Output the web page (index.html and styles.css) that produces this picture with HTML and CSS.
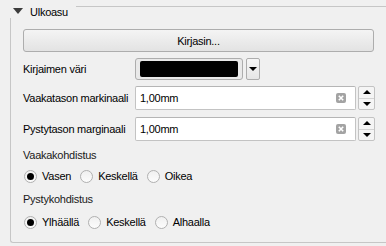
FILE: index.html
```html
<!DOCTYPE html>
<html lang="fi">
<head>
    <meta charset="UTF-8">
    <title>Ulkoasu</title>
    <link rel="stylesheet" href="styles.css">
</head>
<body>
    <div class="group">
        <div class="group-head">
            <span class="arrow"></span>
            <span class="group-title">Ulkoasu</span>
            <span class="group-line"></span>
        </div>
        <div class="group-body">
            <button class="btn">Kirjasin...</button>

            <div class="row row-color">
                <label class="lbl">Kirjaimen väri</label>
                <div class="color-btn"><span class="swatch"></span></div>
                <div class="color-drop"><span class="tri-down"></span></div>
            </div>

            <div class="row row-spin">
                <label class="lbl">Vaakatason markinaali</label>
                <div class="edit">
                    <span class="edit-text">1,00mm</span>
                    <svg class="clear" width="10" height="10" viewBox="0 0 10 10">
                        <path d="M2 0H8Q10 0 10 2V8Q10 10 8 10H2Q0 10 0 8V2Q0 0 2 0Z" fill="#a3a3a3"/>
                        <path d="M2.8 2.8L7.2 7.2M7.2 2.8L2.8 7.2" stroke="#fff" stroke-width="1.6"/>
                    </svg>
                </div>
                <div class="spin">
                    <span class="spin-up"><span class="tri-up"></span></span>
                    <span class="spin-down"><span class="tri-down"></span></span>
                </div>
            </div>

            <div class="row row-spin">
                <label class="lbl">Pystytason marginaali</label>
                <div class="edit">
                    <span class="edit-text">1,00mm</span>
                    <svg class="clear" width="10" height="10" viewBox="0 0 10 10">
                        <path d="M2 0H8Q10 0 10 2V8Q10 10 8 10H2Q0 10 0 8V2Q0 0 2 0Z" fill="#a3a3a3"/>
                        <path d="M2.8 2.8L7.2 7.2M7.2 2.8L2.8 7.2" stroke="#fff" stroke-width="1.6"/>
                    </svg>
                </div>
                <div class="spin">
                    <span class="spin-up"><span class="tri-up"></span></span>
                    <span class="spin-down"><span class="tri-down"></span></span>
                </div>
            </div>

            <div class="caption">Vaakakohdistus</div>
            <div class="radios">
                <span class="radio"><span class="dot checked"></span>Vasen</span>
                <span class="radio"><span class="dot"></span>Keskellä</span>
                <span class="radio"><span class="dot"></span>Oikea</span>
            </div>

            <div class="caption">Pystykohdistus</div>
            <div class="radios">
                <span class="radio"><span class="dot checked"></span>Ylhäällä</span>
                <span class="radio"><span class="dot"></span>Keskellä</span>
                <span class="radio"><span class="dot"></span>Alhaalla</span>
            </div>
        </div>
    </div>
</body>
</html>
```

FILE: styles.css
```css
html, body { margin: 0; padding: 0; }
body {
    background: #f0f0f0;
    font-family: "Liberation Sans", Arial, sans-serif;
    font-size: 11px;
    letter-spacing: -0.25px;
    color: #000;
    overflow: hidden;
    width: 386px;
    height: 246px;
}

.group { margin-left: 10px; width: 376px; }

.group-head {
    display: flex;
    align-items: center;
    height: 18px;
}
.arrow {
    width: 0; height: 0;
    margin-left: 3px;
    border-left: 5px solid transparent;
    border-right: 5px solid transparent;
    border-top: 6px solid #3c3c3c;
    margin-top: 3px;
}
.group-title { margin-left: 7px; margin-top: 5px; }
.group-line {
    flex: 1;
    margin-left: 8px;
    margin-top: -6px;
    border-top: 1px solid #c6c6c6;
}

.group-body {
    box-sizing: border-box;
    border-left: 1px solid #c6c6c6;
    border-bottom: 1px solid #c6c6c6;
    border-bottom-left-radius: 3px;
    height: 225px;
    padding: 11px 0 0 12px;
    display: flex;
    flex-direction: column;
}

.btn {
    font: inherit;
    letter-spacing: inherit;
    color: #000;
    height: 23px;
    width: 351px;
    padding: 0;
    border: 1px solid #adadad;
    border-radius: 3px;
    background: linear-gradient(#f4f4f4, #e3e3e3);
}

.row { display: flex; align-items: center; }
.lbl { width: 112px; }

.row-color { margin-top: 6px; height: 22px; }
.color-btn {
    width: 102px;
    height: 20px;
    border: 1px solid #adadad;
    border-radius: 3px;
    background: #e9e9e9;
    display: flex;
    align-items: center;
    padding-left: 4px;
}
.swatch {
    width: 98px;
    height: 16px;
    background: #000;
    border-radius: 2px;
}
.color-drop {
    width: 12px;
    height: 20px;
    margin-left: 3px;
    border: 1px solid #adadad;
    border-radius: 2px;
    background: linear-gradient(#f6f6f6, #e6e6e6);
    display: flex;
    align-items: center;
    justify-content: center;
}

.row-spin { margin-top: 7px; height: 24px; }
.row-color + .row-spin { margin-top: 6px; }
.edit {
    width: 221px;
    height: 24px;
    background: #fff;
    border: 1px solid #c3c3c3;
    border-top-color: #b5b5b5;
    border-radius: 2px;
    display: flex;
    align-items: center;
    padding-left: 4px;
    box-sizing: border-box;
}
.edit-text { flex: 1; }
.clear { margin-right: 9px; }

.spin {
    box-sizing: border-box;
    width: 17px;
    height: 24px;
    margin-left: 2px;
    border: 1px solid #c3c3c3;
    border-radius: 2px;
    display: flex;
    flex-direction: column;
    background: #f5f5f5;
}
.spin-up, .spin-down {
    flex: 1;
    display: flex;
    align-items: center;
    justify-content: center;
}
.spin-up { border-bottom: 1px solid #d4d4d4; }

.tri-down {
    width: 0; height: 0;
    border-left: 4px solid transparent;
    border-right: 4px solid transparent;
    border-top: 4px solid #000;
}
.tri-up {
    width: 0; height: 0;
    border-left: 4px solid transparent;
    border-right: 4px solid transparent;
    border-bottom: 4px solid #000;
}

.caption { margin-top: 7px; height: 14px; line-height: 14px; color: #1a1a1a; }

.radios { display: flex; margin-top: 7px; height: 14px; align-items: center; }
.radio { display: flex; align-items: center; margin-right: 9px; }
.radio:first-child { margin-left: 1px; }
.dot {
    width: 11px;
    height: 11px;
    border: 1px solid #b0b0b0;
    border-radius: 50%;
    background: linear-gradient(#f0f0f0, #fcfcfc);
    margin-right: 5px;
    position: relative;
}
.dot.checked::after {
    content: "";
    position: absolute;
    left: 2px; top: 2px;
    width: 7px; height: 7px;
    border-radius: 50%;
    background: #000;
}
.radios + .caption { margin-top: 9px; }
.caption + .radios { margin-top: 7px; }
.radios:last-child { margin-top: 9px; }
```
